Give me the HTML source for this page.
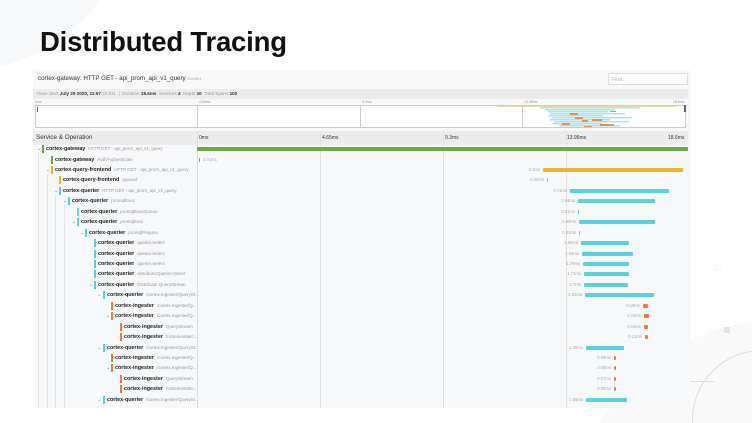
<!DOCTYPE html>
<html style="width:752px;height:423px;overflow:hidden"><head><meta charset="utf-8"><style>
*{margin:0;padding:0;box-sizing:border-box}
body{width:752px;height:423px;overflow:hidden;background:#fff;font-family:"Liberation Sans",sans-serif}
#w{position:relative;width:752px;height:423px;overflow:hidden}
.a{position:absolute}
.row{position:absolute;left:33px;width:655px;height:10px}
.tr{position:absolute;top:0;height:10px;white-space:nowrap;font-size:5.4px;line-height:10px}
.tr b{font-weight:bold;color:#222;margin-left:4px}
.tr i{font-style:normal;color:#999;font-size:4.5px;margin-left:3px}
.cb{position:absolute;top:1px;width:2px;height:8px}
.ch{position:absolute;top:0;font-size:5px;color:#888;line-height:10px}
.bar{position:absolute;top:3px;height:4px;border-radius:1px}
.lb{position:absolute;top:0;font-size:4.2px;color:#aaa;line-height:10px;text-align:right;white-space:nowrap}
.g{background:#6aa84f}.y{background:#f0b42a}.b{background:#5ccfe0}.o{background:#f07a3a}
</style></head><body><div id="w">
<div class="a" style="left:-200px;top:-260px;width:330px;height:330px;border-radius:50%;background:#f7f8fa"></div>
<div class="a" style="left:40px;top:26px;font-size:27.5px;font-weight:bold;color:#111;letter-spacing:-0.2px">Distributed Tracing</div>
<div class="a" style="left:570px;top:320px;width:182px;height:103px;overflow:hidden"><div style="position:absolute;left:0;top:0;width:420px;height:420px;border-radius:50%;background:#f9f9fa"></div><div style="position:absolute;left:122px;top:30px;width:140px;height:140px;border-radius:50%;border:1px solid #ddd"></div></div>
<div class="a" style="left:690px;top:381px;width:25px;height:1px;background:#ddd"></div>
<div class="a" style="left:724px;top:327px;width:6px;height:6px;background:#e3e3e6"></div>
<div class="a" style="left:714px;top:264px;font-size:6px;color:#bbb;line-height:4px;letter-spacing:1px">&nbsp;&middot;&middot;<br>&middot;&middot;&middot;<br>&middot;</div>

<div class="a" style="left:33px;top:70px;width:657px;height:338px;background:#f7f8fa"></div>
<div class="a" style="left:38px;top:75px;font-size:6.2px;color:#333">cortex-gateway: HTTP GET - api_prom_api_v1_query <span style="font-size:4px;color:#aaa">5bc5fb1</span></div>
<div class="a" style="left:608px;top:73px;width:80px;height:12px;background:#fff;border:1px solid #ddd;font-size:5px;color:#aaa;padding:3px 3px">Find...</div>
<div class="a" style="left:33px;top:89px;width:655px;height:10px;background:#ececec;font-size:4.6px;color:#999;line-height:10px;padding-left:3px;white-space:nowrap">Trace Start <b style="color:#333">July 29 2020, 11:57</b>:24.811 &nbsp;| &nbsp;Duration <b style="color:#333">18.6ms</b> &nbsp;Services <b style="color:#333">4</b> &nbsp;Depth <b style="color:#333">10</b> &nbsp;Total Spans <b style="color:#333">102</b></div>
<div class="a" style="left:35px;top:100px;font-size:3.5px;color:#999">0ms</div>
<div class="a" style="left:199px;top:100px;font-size:3.5px;color:#999">4.65ms</div>
<div class="a" style="left:362px;top:100px;font-size:3.5px;color:#999">9.3ms</div>
<div class="a" style="left:524px;top:100px;font-size:3.5px;color:#999">13.95ms</div>
<div class="a" style="left:673px;top:100px;font-size:3.5px;color:#999">18.6ms</div>
<div class="a" style="left:35px;top:105px;width:651px;height:23px;background:#fff;border:1px solid #ccc"></div>
<div class="a" style="left:197px;top:105px;width:1px;height:23px;background:#ccc"></div>
<div class="a" style="left:360px;top:105px;width:1px;height:23px;background:#ccc"></div>
<div class="a" style="left:522px;top:105px;width:1px;height:23px;background:#ccc"></div>
<div class="a" style="left:684px;top:105px;width:2px;height:7px;background:#666"></div>
<div class="a" style="left:37px;top:107px;width:1px;height:5px;background:#666"></div>
<div class="a" style="left:497px;top:106px;width:180px;height:1px;background:#e8d9a8"></div>
<svg class="a" style="left:540px;top:107px" width="120" height="20">
<g fill="#a9e3ee"><rect x="0" y="0" width="100" height="1.5"/><rect x="5" y="2" width="70" height="1.5"/><rect x="8" y="4" width="60" height="1.5"/><rect x="10" y="6" width="75" height="1.5"/><rect x="8" y="8" width="55" height="1.5"/><rect x="12" y="10" width="80" height="1.5"/><rect x="10" y="12" width="60" height="1.5"/><rect x="14" y="14" width="75" height="1.5"/><rect x="12" y="16" width="50" height="1.5"/><rect x="20" y="18" width="60" height="1.5"/></g>
<g fill="#e0925a"><rect x="30" y="6" width="8" height="2"/><rect x="35" y="10" width="8" height="2"/><rect x="42" y="13" width="6" height="2"/><rect x="52" y="12" width="10" height="2"/><rect x="22" y="16" width="8" height="2"/><rect x="60" y="17" width="14" height="2"/><rect x="44" y="19" width="8" height="1"/><rect x="70" y="4" width="6" height="1"/></g>
</svg>
<div class="a" style="left:33px;top:131px;width:655px;height:14px;background:#ececec"></div>
<div class="a" style="left:36px;top:131px;font-size:6.3px;line-height:14px;color:#333">Service &amp; Operation</div>
<div class="a" style="left:199px;top:131px;font-size:5px;line-height:14px;color:#333">0ms</div>
<div class="a" style="left:322px;top:131px;font-size:5px;line-height:14px;color:#333">4.65ms</div>
<div class="a" style="left:445px;top:131px;font-size:5px;line-height:14px;color:#333">9.3ms</div>
<div class="a" style="left:567px;top:131px;font-size:5px;line-height:14px;color:#333">13.95ms</div>
<div class="a" style="left:668px;top:131px;font-size:5px;line-height:14px;color:#333">18.6ms</div>
<div class="a" style="left:197px;top:131px;width:1px;height:277px;background:#ddd"></div>
<div class="a" style="left:320px;top:131px;width:1px;height:277px;background:#e2e2e2"></div>
<div class="a" style="left:443px;top:131px;width:1px;height:277px;background:#e2e2e2"></div>
<div class="a" style="left:566px;top:131px;width:1px;height:277px;background:#e2e2e2"></div>
<div class="a" style="left:38px;top:153px;width:1px;height:255px;background:#e4e4e4"></div>
<div class="a" style="left:47px;top:174px;width:1px;height:234px;background:#e4e4e4"></div>
<div class="a" style="left:55px;top:195px;width:1px;height:213px;background:#e4e4e4"></div>
<div class="a" style="left:64px;top:205px;width:1px;height:203px;background:#e4e4e4"></div>

<div class="row" style="top:144px"><span class="ch" style="left:4px">⌄</span><span class="cb g" style="left:9px"></span><span class="tr" style="left:9px"><b>cortex-gateway</b><i>HTTP GET - api_prom_api_v1_query</i></span></div>
<div class="a bar g" style="left:197px;top:147px;width:491px"></div>

<div class="row" style="top:154.5px"><span class="cb g" style="left:18px"></span><span class="tr" style="left:18px"><b>cortex-gateway</b><i>Auth/Authenticate</i></span></div>
<div class="a bar g" style="left:199px;top:157.5px;width:1px"></div><div class="a lb" style="left:203px;top:154.5px">0.01ms</div>

<div class="row" style="top:165px"><span class="ch" style="left:13px">⌄</span><span class="cb y" style="left:18px"></span><span class="tr" style="left:18px"><b>cortex-query-frontend</b><i>HTTP GET - api_prom_api_v1_query</i></span></div>
<div class="a bar y" style="left:543px;top:168px;width:140px"></div><div class="a lb" style="right:212px;top:165px">5.3ms</div>

<div class="row" style="top:175.4px"><span class="cb y" style="left:26px"></span><span class="tr" style="left:26px"><b>cortex-query-frontend</b><i>queued</i></span></div>
<div class="a bar y" style="left:547px;top:178.4px;width:1px"></div><div class="a lb" style="right:208px;top:175.4px">0.05ms</div>

<div class="row" style="top:185.8px"><span class="ch" style="left:21px">⌄</span><span class="cb b" style="left:26px"></span><span class="tr" style="left:26px"><b>cortex-querier</b><i>HTTP GET - api_prom_api_v1_query</i></span></div>
<div class="a bar b" style="left:570px;top:188.8px;width:99px"></div><div class="a lb" style="right:185px;top:185.8px">3.74ms</div>

<div class="row" style="top:196.2px"><span class="ch" style="left:30px">⌄</span><span class="cb b" style="left:35px"></span><span class="tr" style="left:35px"><b>cortex-querier</b><i>promqlExec</i></span></div>
<div class="a bar b" style="left:578px;top:199.2px;width:77px"></div><div class="a lb" style="right:177px;top:196.2px">2.94ms</div>

<div class="row" style="top:206.7px"><span class="cb b" style="left:44px"></span><span class="tr" style="left:44px"><b>cortex-querier</b><i>promqlExecQueue</i></span></div>
<div class="a bar b" style="left:578px;top:209.7px;width:1px"></div><div class="a lb" style="right:177px;top:206.7px">0.01ms</div>

<div class="row" style="top:217.1px"><span class="ch" style="left:39px">⌄</span><span class="cb b" style="left:44px"></span><span class="tr" style="left:44px"><b>cortex-querier</b><i>promqlEval</i></span></div>
<div class="a bar b" style="left:579px;top:220.1px;width:76px"></div><div class="a lb" style="right:176px;top:217.1px">2.89ms</div>

<div class="row" style="top:227.6px"><span class="ch" style="left:47px">⌄</span><span class="cb b" style="left:52px"></span><span class="tr" style="left:52px"><b>cortex-querier</b><i>promqlPrepare</i></span></div>
<div class="a bar b" style="left:579px;top:230.6px;width:1px"></div><div class="a lb" style="right:176px;top:227.6px">0.02ms</div>

<div class="row" style="top:238px"><span class="cb b" style="left:61px"></span><span class="tr" style="left:61px"><b>cortex-querier</b><i>querier.Select</i></span></div>
<div class="a bar b" style="left:581px;top:241px;width:48px"></div><div class="a lb" style="right:174px;top:238px">1.85ms</div>

<div class="row" style="top:248.5px"><span class="cb b" style="left:61px"></span><span class="tr" style="left:61px"><b>cortex-querier</b><i>querier.Select</i></span></div>
<div class="a bar b" style="left:582px;top:251.5px;width:51px"></div><div class="a lb" style="right:173px;top:248.5px">1.94ms</div>

<div class="row" style="top:258.9px"><span class="cb b" style="left:61px"></span><span class="tr" style="left:61px"><b>cortex-querier</b><i>querier.Select</i></span></div>
<div class="a bar b" style="left:583px;top:261.9px;width:46px"></div><div class="a lb" style="right:172px;top:258.9px">1.79ms</div>

<div class="row" style="top:269.4px"><span class="cb b" style="left:61px"></span><span class="tr" style="left:61px"><b>cortex-querier</b><i>distributorQuerier.Select</i></span></div>
<div class="a bar b" style="left:584px;top:272.4px;width:45px"></div><div class="a lb" style="right:171px;top:269.4px">1.74ms</div>

<div class="row" style="top:279.8px"><span class="ch" style="left:56px">⌄</span><span class="cb b" style="left:61px"></span><span class="tr" style="left:61px"><b>cortex-querier</b><i>Distributor.QueryStream</i></span></div>
<div class="a bar b" style="left:584px;top:282.8px;width:44px"></div><div class="a lb" style="right:171px;top:279.8px">1.7ms</div>

<div class="row" style="top:290.3px"><span class="ch" style="left:64px">⌄</span><span class="cb b" style="left:70px"></span><span class="tr" style="left:70px"><b>cortex-querier</b><i>/cortex.Ingester/QuerySt...</i></span></div>
<div class="a bar b" style="left:585px;top:293.3px;width:69px"></div><div class="a lb" style="right:170px;top:290.3px">2.63ms</div>

<div class="row" style="top:300.7px"><span class="cb o" style="left:78px"></span><span class="tr" style="left:78px"><b>cortex-ingester</b><i>/cortex.Ingester/Q...</i></span></div>
<div class="a bar o" style="left:643px;top:303.7px;width:5px"></div><div class="a lb" style="right:112px;top:300.7px">0.19ms</div>

<div class="row" style="top:311.2px"><span class="ch" style="left:73px">⌄</span><span class="cb o" style="left:78px"></span><span class="tr" style="left:78px"><b>cortex-ingester</b><i>/cortex.Ingester/Q...</i></span></div>
<div class="a bar o" style="left:644px;top:314.2px;width:5px"></div><div class="a lb" style="right:111px;top:311.2px">0.18ms</div>

<div class="row" style="top:321.6px"><span class="cb o" style="left:87px"></span><span class="tr" style="left:87px"><b>cortex-ingester</b><i>QueryStream</i></span></div>
<div class="a bar o" style="left:644px;top:324.6px;width:4px"></div><div class="a lb" style="right:111px;top:321.6px">0.16ms</div>

<div class="row" style="top:332px"><span class="cb o" style="left:87px"></span><span class="tr" style="left:87px"><b>cortex-ingester</b><i>forSeriesMatc...</i></span></div>
<div class="a bar o" style="left:645px;top:335px;width:3px"></div><div class="a lb" style="right:110px;top:332px">0.12ms</div>

<div class="row" style="top:342.5px"><span class="ch" style="left:64px">⌄</span><span class="cb b" style="left:70px"></span><span class="tr" style="left:70px"><b>cortex-querier</b><i>/cortex.Ingester/QuerySt...</i></span></div>
<div class="a bar b" style="left:586px;top:345.5px;width:38px"></div><div class="a lb" style="right:169px;top:342.5px">1.45ms</div>

<div class="row" style="top:352.9px"><span class="cb o" style="left:78px"></span><span class="tr" style="left:78px"><b>cortex-ingester</b><i>/cortex.Ingester/Q...</i></span></div>
<div class="a bar o" style="left:614px;top:355.9px;width:2px"></div><div class="a lb" style="right:141px;top:352.9px">0.09ms</div>

<div class="row" style="top:363.4px"><span class="ch" style="left:73px">⌄</span><span class="cb o" style="left:78px"></span><span class="tr" style="left:78px"><b>cortex-ingester</b><i>/cortex.Ingester/Q...</i></span></div>
<div class="a bar o" style="left:614px;top:366.4px;width:2px"></div><div class="a lb" style="right:141px;top:363.4px">0.09ms</div>

<div class="row" style="top:373.8px"><span class="cb o" style="left:87px"></span><span class="tr" style="left:87px"><b>cortex-ingester</b><i>QueryStream</i></span></div>
<div class="a bar o" style="left:614px;top:376.8px;width:2px"></div><div class="a lb" style="right:141px;top:373.8px">0.07ms</div>

<div class="row" style="top:384.3px"><span class="cb o" style="left:87px"></span><span class="tr" style="left:87px"><b>cortex-ingester</b><i>forSeriesMatc...</i></span></div>
<div class="a bar o" style="left:614px;top:387.3px;width:2px"></div><div class="a lb" style="right:141px;top:384.3px">0.06ms</div>

<div class="row" style="top:394.7px"><span class="ch" style="left:64px">⌄</span><span class="cb b" style="left:70px"></span><span class="tr" style="left:70px"><b>cortex-querier</b><i>/cortex.Ingester/QuerySt...</i></span></div>
<div class="a bar b" style="left:586px;top:397.7px;width:41px"></div><div class="a lb" style="right:169px;top:394.7px">1.56ms</div>
</div></body></html>
